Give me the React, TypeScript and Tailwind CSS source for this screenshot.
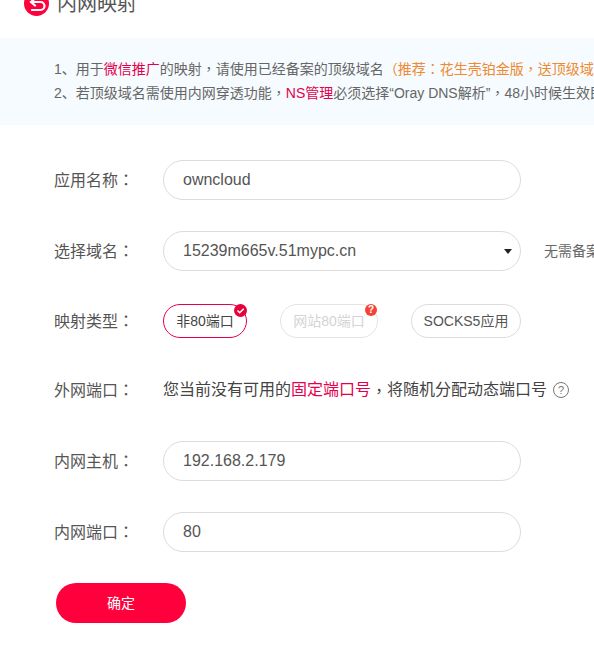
const font = "font-['Liberation_Sans','Noto_Sans_CJK_SC',sans-serif]";

// the reference centres its full-width punctuation, the TC cut of the font does too
function Mark({ children }: { children: string }) {
  return <span className="font-['Noto_Sans_CJK_TC',sans-serif] leading-none">{children}</span>;
}

function Field({ label, children }: { label: string; children: React.ReactNode }) {
  return (
    <div className="flex items-center">
      <div className="mt-[2px] w-[109px] shrink-0 text-base text-[#555]">
        {label}
        <Mark>：</Mark>
      </div>
      {children}
    </div>
  );
}

function TextBox({ value }: { value: string }) {
  return (
    <div className="flex h-10 w-[358px] items-center rounded-[20px] border border-[#dcdcdc] bg-white px-[19px] text-base text-[#555]">
      {value}
    </div>
  );
}

export default function App() {
  return (
    <div className={`h-[647px] w-[594px] overflow-hidden bg-white ${font}`}>
      {/* title is cut by the top of the window */}
      <div className="-mt-[9px] flex h-[25px] items-center pl-6">
        <svg width="25" height="25" viewBox="0 0 25 25" className="shrink-0">
          <circle cx="12.5" cy="12.5" r="12.5" fill="#ff003c" />
          <path d="M8 19h8.500a4 4 0 0 0 0-8H8" fill="none" stroke="#fff" strokeWidth="2.200" strokeLinecap="round" />
          <path d="M11 7.500 7 11l4 3.500" fill="none" stroke="#fff" strokeWidth="2.200" strokeLinecap="round" />
        </svg>
        <span className="ml-2 text-xl leading-none whitespace-nowrap text-[#555]">内网映射</span>
      </div>

      <div className="mt-[22px] h-[87px] overflow-hidden bg-[#f5fbfe] pt-[19px] pl-[54px] text-sm leading-6 whitespace-nowrap text-[#666]">
        <p>
          1、用于<span className="text-[#e6004c]">微信推广</span>的映射<Mark>，</Mark>请使用已经备案的顶级域名
          <span className="text-[#f08a30]">
            （推荐<Mark>：</Mark>花生壳铂金版<Mark>，</Mark>送顶级域名
          </span>
        </p>
        <p>
          2、若顶级域名需使用内网穿透功能<Mark>，</Mark>
          <span className="text-[#e6004c]">NS管理</span>必须选择“Oray DNS解析”<Mark>，</Mark>48小时候生效即可
        </p>
      </div>

      <div className="flex flex-col pt-[35px] pl-[54px]">
        <Field label="应用名称">
          <TextBox value="owncloud" />
        </Field>

        <div className="mt-[31px] flex items-center">
          <Field label="选择域名">
            <div className="flex h-10 w-[358px] items-center justify-between rounded-[20px] border border-[#dcdcdc] bg-white pr-[8px] pl-[19px] text-base text-[#555]">
              15239m665v.51mypc.cn
              <svg width="8" height="5" viewBox="0 0 8 5">
                <path d="M0 0h8L4 5z" fill="#222" />
              </svg>
            </div>
          </Field>
          <span className="ml-[23px] text-sm whitespace-nowrap text-[#666]">无需备案</span>
        </div>

        <div className="mt-[33px]">
          <Field label="映射类型">
            <div className="flex w-[358px] items-center justify-between">
              <div className="relative flex h-[34px] w-[84px] items-center justify-center rounded-[17px] border border-[#e6004c] text-sm text-[#444]">
                非80端口
                <svg width="13" height="13" viewBox="0 0 13 13" className="absolute -top-[1px] -right-[1px]">
                  <circle cx="6.5" cy="6.500" r="6.500" fill="#e6003c" />
                  <path d="M3.500 6.500l2.200 2.200 4-4" fill="none" stroke="#fff" strokeWidth="1.600" />
                </svg>
              </div>
              <div className="relative ml-[33px] flex h-[34px] w-[98px] items-center justify-center rounded-[17px] border border-[#e4e4e4] text-sm text-[#d4d4d4]">
                网站80端口
                <span className="absolute -top-[1px] right-0 flex h-3 w-3 items-center justify-center rounded-full bg-[#f44336] text-[10px] leading-none font-bold text-white">
                  ?
                </span>
              </div>
              <div className="ml-[33px] flex h-[34px] w-[110px] items-center justify-center rounded-[17px] border border-[#dcdcdc] text-sm text-[#555]">
                SOCKS5应用
              </div>
            </div>
          </Field>
        </div>

        <div className="mt-[40px] flex h-[24px] items-center">
          <Field label="外网端口">
            <div className="flex items-center whitespace-nowrap text-base text-[#444]">
              您当前没有可用的<span className="text-[#e6004c]">固定端口号</span>
              <Mark>，</Mark>将随机分配动态端口号
              <span className="ml-[6px] flex h-4 w-4 items-center justify-center rounded-full border border-[#777] text-[11px] leading-none text-[#777]">
                ?
              </span>
            </div>
          </Field>
        </div>

        <div className="mt-[39px]">
          <Field label="内网主机">
            <TextBox value="192.168.2.179" />
          </Field>
        </div>

        <div className="mt-[31px]">
          <Field label="内网端口">
            <TextBox value="80" />
          </Field>
        </div>

        <button className="mt-[31px] ml-[2px] h-10 w-[130px] rounded-[20px] bg-[#ff003c] text-sm text-white">确定</button>
      </div>
    </div>
  );
}
